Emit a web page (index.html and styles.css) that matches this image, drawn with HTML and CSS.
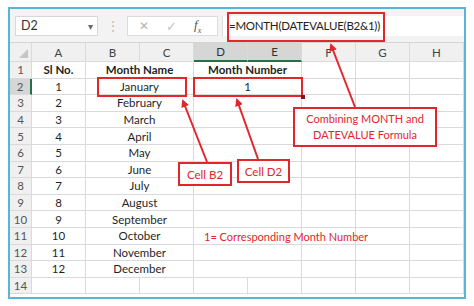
FILE: index.html
```html
<!DOCTYPE html>
<html lang="en">
<head>
  <meta charset="UTF-8">
  <meta name="viewport" content="width=device-width, initial-scale=1.0">
  <title>MONTH and DATEVALUE</title>
  <link rel="stylesheet" href="styles.css">
</head>
<body>
  <div class="page">
    <div class="sheet">
      <div class="bar">
        <div class="namebox"><span>D2</span><span class="caret">&#9662;</span></div>
        <div class="grip">&#8942;</div>
        <div class="fxgroup">
          <span class="cancel">&#10005;</span>
          <span class="enter">&#10003;</span>
          <span class="fx">f<sub>x</sub></span>
        </div>
        <div class="formula">=MONTH(DATEVALUE(B2&amp;1))</div>
      </div>

      <div class="grid">
        <div class="corner"></div>
        <div class="col">A</div>
        <div class="col">B</div>
        <div class="col">C</div>
        <div class="col sel">D</div>
        <div class="col sel">E</div>
        <div class="col">F</div>
        <div class="col">G</div>
        <div class="col">H</div>

        <div class="rh">1</div>
        <div class="c b">Sl No.</div>
        <div class="c b wide">Month Name</div>
        <div class="c b wide">Month Number</div>
        <div class="c"></div><div class="c"></div><div class="c"></div>

        <div class="rh sel">2</div>
        <div class="c">1</div>
        <div class="c wide">January</div>
        <div class="c wide">1</div>
        <div class="c"></div><div class="c"></div><div class="c"></div>

        <div class="rh">3</div>
        <div class="c">2</div>
        <div class="c wide">February</div>
        <div class="c wide"></div>
        <div class="c"></div><div class="c"></div><div class="c"></div>

        <div class="rh">4</div>
        <div class="c">3</div>
        <div class="c wide">March</div>
        <div class="c wide"></div>
        <div class="c"></div><div class="c"></div><div class="c"></div>

        <div class="rh">5</div>
        <div class="c">4</div>
        <div class="c wide">April</div>
        <div class="c wide"></div>
        <div class="c"></div><div class="c"></div><div class="c"></div>

        <div class="rh">6</div>
        <div class="c">5</div>
        <div class="c wide">May</div>
        <div class="c wide"></div>
        <div class="c"></div><div class="c"></div><div class="c"></div>

        <div class="rh">7</div>
        <div class="c">6</div>
        <div class="c wide">June</div>
        <div class="c wide"></div>
        <div class="c"></div><div class="c"></div><div class="c"></div>

        <div class="rh">8</div>
        <div class="c">7</div>
        <div class="c wide">July</div>
        <div class="c wide"></div>
        <div class="c"></div><div class="c"></div><div class="c"></div>

        <div class="rh">9</div>
        <div class="c">8</div>
        <div class="c wide">August</div>
        <div class="c wide"></div>
        <div class="c"></div><div class="c"></div><div class="c"></div>

        <div class="rh">10</div>
        <div class="c">9</div>
        <div class="c wide">September</div>
        <div class="c wide"></div>
        <div class="c"></div><div class="c"></div><div class="c"></div>

        <div class="rh">11</div>
        <div class="c">10</div>
        <div class="c wide">October</div>
        <div class="c wide"></div>
        <div class="c"></div><div class="c"></div><div class="c"></div>

        <div class="rh">12</div>
        <div class="c">11</div>
        <div class="c wide">November</div>
        <div class="c wide"></div>
        <div class="c"></div><div class="c"></div><div class="c"></div>

        <div class="rh">13</div>
        <div class="c">12</div>
        <div class="c wide">December</div>
        <div class="c wide"></div>
        <div class="c"></div><div class="c"></div><div class="c"></div>

        <div class="rh">14</div>
        <div class="c"></div><div class="c"></div><div class="c"></div><div class="c"></div>
        <div class="c"></div><div class="c"></div><div class="c"></div><div class="c"></div>
      </div>
    </div>

    <!-- annotations drawn over the sheet -->
    <div class="box box-formula"></div>
    <div class="box box-b2"></div>
    <div class="box box-d2"><span class="handle"></span></div>
    <div class="label label-b2">Cell B2</div>
    <div class="label label-d2">Cell D2</div>
    <div class="label label-combo">Combining MONTH and<br>DATEVALUE Formula</div>
    <div class="note">1= Corresponding Month Number</div>

    <svg class="arrows" width="474" height="306" viewBox="0 0 474 306">
      <defs>
        <marker id="head" markerWidth="8" markerHeight="8" refX="6" refY="4" orient="auto" markerUnits="userSpaceOnUse">
          <path d="M0,0 L8,4 L0,8 Z" fill="#e3262c"/>
        </marker>
      </defs>
      <line x1="207" y1="162" x2="183" y2="101" stroke="#e3262c" stroke-width="2" marker-end="url(#head)"/>
      <line x1="258" y1="159" x2="237" y2="100" stroke="#e3262c" stroke-width="2" marker-end="url(#head)"/>
      <line x1="355" y1="107" x2="331" y2="45" stroke="#e3262c" stroke-width="2" marker-end="url(#head)"/>
    </svg>
  </div>
</body>
</html>
```

FILE: styles.css
```css
body {
  margin: 0;
  background-color: #fff;
  font-family: Lato, "Liberation Sans", sans-serif;
  color: #1f1f1f;
}
.page {
  position: relative;
  width: 474px;
  height: 306px;
  overflow: hidden;
}
.sheet {
  margin: 7px 0 0 8px;
  width: 454px;
  border: 2px solid #55b7d8;
  background-color: #fff;
  padding-bottom: 3px;
}

/* formula bar */
.bar {
  display: flex;
  align-items: center;
  height: 34px;
  background-color: #f3f3f3;
  border-bottom: 1px solid #d4d4d4;
  box-sizing: border-box;
  font-size: 13px;
  color: #444;
}
.namebox {
  display: flex;
  justify-content: space-between;
  align-items: center;
  margin-left: 5px;
  width: 83px;
  height: 20px;
  padding: 0 4px 0 5px;
  box-sizing: border-box;
  background-color: #fff;
  border: 1px solid #d8d8d8;
  font-size: 12.5px;
  color: #333;
}
.caret {
  font-size: 10px;
  color: #666;
}
.grip {
  width: 29px;
  text-align: center;
  color: #b8b8b8;
  font-size: 12px;
}
.fxgroup {
  display: flex;
  align-items: center;
  width: 91px;
  height: 20px;
  box-sizing: border-box;
  background-color: #fff;
  border: 1px solid #dcdcdc;
}
.cancel {
  margin-left: 11px;
  color: #b3b3b3;
  font-size: 12px;
}
.enter {
  margin-left: 17px;
  color: #c4c4c4;
  font-size: 13px;
}
.fx {
  margin-left: 17px;
  font-family: "Liberation Serif", serif;
  font-style: italic;
  font-size: 13px;
  color: #555;
}
.fx sub {
  font-size: 8px;
}
.formula {
  flex: 1;
  height: 20px;
  margin-left: 4px;
  padding-left: 6px;
  line-height: 20px;
  background-color: #fff;
  border-left: 1px solid #dcdcdc;
  font-size: 11.5px;
  letter-spacing: -0.25px;
  color: #222;
}

/* grid */
.grid {
  display: grid;
  grid-template-columns: 22px repeat(8, 54px);
  grid-template-rows: 19px;
  grid-auto-rows: 16.6px;
  font-size: 11.5px;
}
.grid > div {
  box-sizing: border-box;
  display: flex;
  align-items: center;
  justify-content: center;
  border-right: 1px solid #dadada;
  border-bottom: 1px solid #dadada;
}
.corner {
  position: relative;
  background-color: #f0f0f0;
}
.corner::after {
  content: "";
  position: absolute;
  right: 3px;
  bottom: 3px;
  border-style: solid;
  border-width: 0 0 9px 9px;
  border-color: transparent transparent #c6c6c6 transparent;
}
.col {
  background-color: #f0f0f0;
  color: #444;
  font-size: 11.5px;
}
.col.sel {
  background-color: #d6d6d6;
  border-bottom: 2px solid #217346 !important;
  color: #333;
}
.rh {
  background-color: #f0f0f0;
  color: #555;
  font-size: 11.5px;
}
.rh.sel {
  background-color: #d6d6d6;
  border-right: 2px solid #217346 !important;
}
.c.wide {
  grid-column: span 2;
}
.c.b {
  font-weight: bold;
}

/* annotations */
.box,
.label {
  position: absolute;
  box-sizing: border-box;
  border: 2px solid #e3262c;
}
.box-formula {
  left: 227px;
  top: 12px;
  width: 158px;
  height: 30px;
}
.box-b2 {
  left: 97px;
  top: 77px;
  width: 90px;
  height: 20px;
}
.box-d2 {
  left: 193px;
  top: 77px;
  width: 110px;
  height: 20px;
}
.handle {
  position: absolute;
  right: -4px;
  bottom: -4px;
  width: 4px;
  height: 4px;
  background-color: #7a1b1b;
}
.label {
  display: flex;
  align-items: center;
  justify-content: center;
  background-color: #fff;
  color: #e3262c;
  font-size: 11.5px;
  text-align: center;
}
.label-b2 {
  left: 178px;
  top: 162px;
  width: 54px;
  height: 24px;
}
.label-d2 {
  left: 237px;
  top: 159px;
  width: 53px;
  height: 24px;
}
.label-combo {
  left: 293px;
  top: 107px;
  width: 144px;
  height: 40px;
  font-size: 11px;
  line-height: 16px;
}
.note {
  position: absolute;
  left: 204px;
  top: 230px;
  color: #e3262c;
  font-size: 11px;
}
.arrows {
  position: absolute;
  left: 0;
  top: 0;
}
```
